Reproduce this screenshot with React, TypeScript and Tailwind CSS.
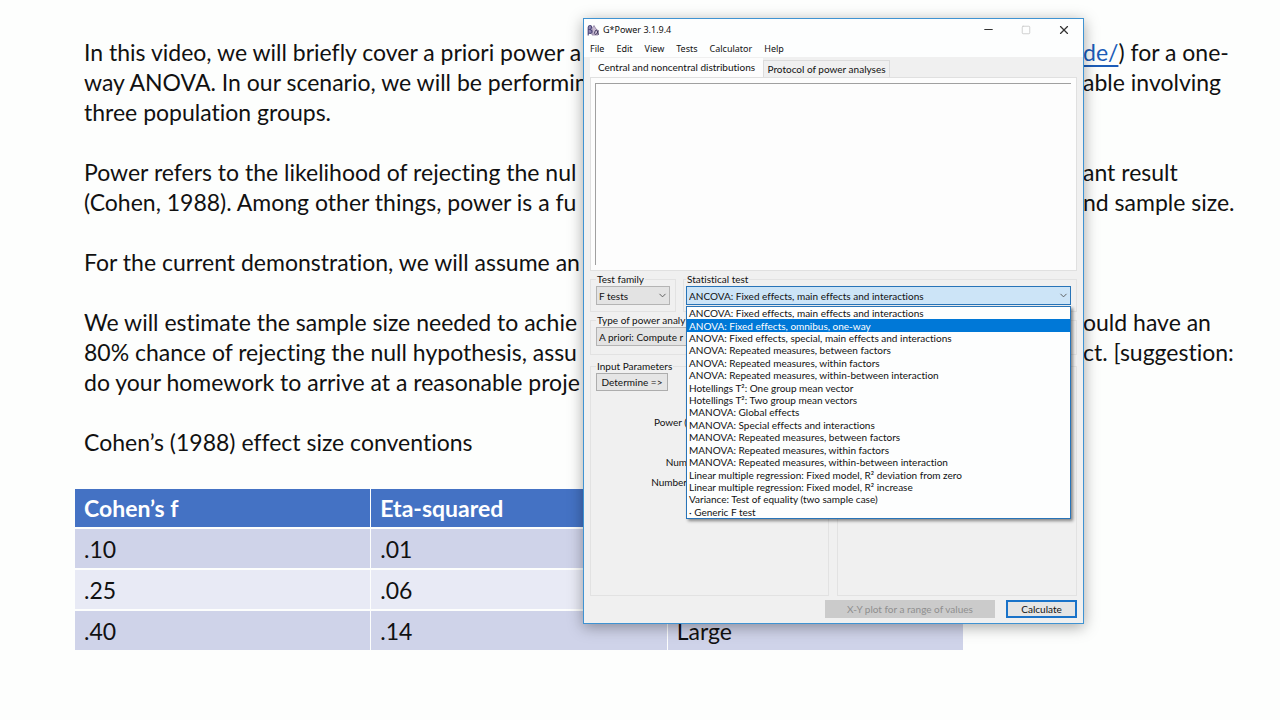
import type { ReactNode } from "react";
import { ChevronDown, Minus, Square, X } from "lucide-react";

type Line = { left: string; right?: ReactNode };

const paragraphs: Line[][] = [
  [
    {
      left: "In this video, we will briefly cover a priori power a",
      right: (
        <>
          <a href="#gpower" className="text-[#1c5cb8] underline decoration-2 underline-offset-4">
            de/
          </a>
          ) for a one-
        </>
      ),
    },
    { left: "way ANOVA. In our scenario, we will be performin", right: "able involving" },
    { left: "three population groups." },
  ],
  [
    { left: "Power refers to the likelihood of rejecting the nul", right: "ant result" },
    { left: "(Cohen, 1988). Among other things, power is a fu", right: "nd sample size." },
  ],
  [{ left: "For the current demonstration, we will assume an" }],
  [
    { left: "We will estimate the sample size needed to achie", right: "ould have an" },
    { left: "80% chance of rejecting the null hypothesis, assu", right: "ct. [suggestion:" },
    { left: "do your homework to arrive at a reasonable proje" },
  ],
  [{ left: "Cohen’s (1988) effect size conventions" }],
];

const conventions = [
  [".10", ".01", ""],
  [".25", ".06", ""],
  [".40", ".14", "Large"],
];

const tests = [
  "ANCOVA: Fixed effects, main effects and interactions",
  "ANOVA: Fixed effects, omnibus, one-way",
  "ANOVA: Fixed effects, special, main effects and interactions",
  "ANOVA: Repeated measures, between factors",
  "ANOVA: Repeated measures, within factors",
  "ANOVA: Repeated measures, within-between interaction",
  "Hotellings T²: One group mean vector",
  "Hotellings T²: Two group mean vectors",
  "MANOVA: Global effects",
  "MANOVA: Special effects and interactions",
  "MANOVA: Repeated measures, between factors",
  "MANOVA: Repeated measures, within factors",
  "MANOVA: Repeated measures, within-between interaction",
  "Linear multiple regression: Fixed model, R² deviation from zero",
  "Linear multiple regression: Fixed model, R² increase",
  "Variance: Test of equality (two sample case)",
  "· Generic F test",
];

function Document() {
  return (
    <main className="pl-[84px] pt-[37px] font-['Lato','Open_Sans',sans-serif] text-[23px] leading-[30px] text-[#111] [font-variant-ligatures:none]">
      <div className="flex flex-col gap-[30px]">
        {paragraphs.map((lines, i) => (
          <div key={i}>
            {lines.map((line) => (
              <p key={line.left} className="flex justify-between whitespace-nowrap">
                <span>{line.left}</span>
                <span className="w-[197px]">{line.right}</span>
              </p>
            ))}
          </div>
        ))}
      </div>
      <table className="-ml-[10px] mt-[30px] w-[890px] table-fixed border-separate border-spacing-x-[1px] border-spacing-y-[2px] text-left">
        <thead>
          <tr>
            {["Cohen’s f", "Eta-squared", ""].map((h) => (
              <th key={h} className="h-[38px] bg-[#4472c4] px-[9px] font-bold text-white">
                {h}
              </th>
            ))}
          </tr>
        </thead>
        <tbody>
          {conventions.map((row) => (
            <tr key={row[0]} className="odd:bg-[#cfd3e9] even:bg-[#e8eaf5]">
              {row.map((cell, i) => (
                <td key={i} className="h-[39px] px-[9px]">
                  {cell}
                </td>
              ))}
            </tr>
          ))}
        </tbody>
      </table>
    </main>
  );
}

function AppIcon() {
  return (
    <svg viewBox="0 0 12 12" className="size-3" aria-hidden="true">
      <path d="M5 11V4.500L7 1.500L9 5L11 6.500V11Z" fill="#c9bbd3" stroke="#8d7d9f" strokeWidth="0.8" />
      <path d="M1.200 11.500V3.500Q1.200 1.500 3 1.500T4.500 3.500Q4.500 5 3 5.500Q5.200 6 5 8T1.500 9" fill="#8f86b0" stroke="#4a4478" strokeWidth="1.100" />
      <path d="M11.500 6.500Q10 10.800 8.200 10.500T8.200 7T11.500 10.800" fill="none" stroke="#3a3458" strokeWidth="0.900" />
    </svg>
  );
}

function Group({ title, className, children }: { title: string; className: string; children?: ReactNode }) {
  return (
    <fieldset className={`min-w-0 border border-[#e2e2e2] pr-[5px] ${className}`}>
      <legend className="whitespace-nowrap px-px leading-[12px]">{title}</legend>
      {children}
    </fieldset>
  );
}

function Picker({ label, value, open }: { label: string; value: string; open?: boolean }) {
  return (
    <div className="relative">
      <select
        aria-label={label}
        defaultValue={value}
        className={`block h-[19px] w-full appearance-none border pl-[2px] pr-4 leading-[14px] ${
          open ? "border-[#2874b8] bg-[#cce4f7]" : "border-[#b4b4b4] bg-[#e3e3e3]"
        }`}
      >
        <option>{value}</option>
      </select>
      <ChevronDown strokeWidth={2} className="pointer-events-none absolute right-[2px] top-[4px] size-[11px] text-[#555]" />
    </div>
  );
}

function PowerWindow() {
  return (
    <section
      aria-label="G*Power"
      className="absolute right-[196px] top-[18px] flex h-[606px] w-[501px] flex-col border border-[#3f93d2] bg-[#f0f0f0] font-['Lato','Open_Sans',sans-serif] text-[10px] leading-[12px] text-[#111] shadow-[0_3px_14px_rgba(0,0,0,0.35)] [font-variant-ligatures:none]"
    >
      <header className="flex h-[21px] items-center bg-[#fdfefe] pl-[3px] font-['Noto_Sans','Open_Sans',sans-serif]">
        <AppIcon />
        <h1 className="ml-1 flex-1 text-[9px]">G*Power 3.1.9.4</h1>
        <button aria-label="Minimize" className="flex w-[37px] justify-center text-[#333]">
          <Minus className="size-[13px]" strokeWidth={2} />
        </button>
        <button aria-label="Maximize" disabled className="flex w-[38px] justify-center text-[#c8c8c8]">
          <Square className="size-[10px]" strokeWidth={2} />
        </button>
        <button aria-label="Close" className="flex w-[38px] justify-center text-[#333]">
          <X className="size-[14px]" strokeWidth={2} />
        </button>
      </header>
      <nav className="flex h-[17px] items-center gap-3 bg-[#fdfefe] pl-[6px] font-['Noto_Sans','Open_Sans',sans-serif] text-[9px]">
        {["File", "Edit", "View", "Tests", "Calculator", "Help"].map((m) => (
          <button key={m}>{m}</button>
        ))}
      </nav>
      <div className="flex flex-1 flex-col px-[6px] pt-px">
        <div role="tablist" className="flex items-end">
          <button role="tab" aria-selected="true" className="h-[19px] w-[173px] bg-[#fdfdfd] pb-[2px]">
            Central and noncentral distributions
          </button>
          <button role="tab" aria-selected="false" className="h-[17px] w-[127px] border border-b-0 border-[#dcdcdc] bg-[#f0f0f0]">
            Protocol of power analyses
          </button>
        </div>
        <div role="tabpanel" className="h-[194px] border border-[#e0e0e0] bg-[#fdfdfd] py-[5px] pl-[4px] pr-[5px]">
          <div className="h-[182px] border-l border-t border-[#a0a0a0]" />
        </div>
        <div className="mt-[2px] flex gap-[7px]">
          <Group title="Test family" className="h-[39px] w-[86px] pl-[5px]">
            <div className="mt-px">
              <Picker label="Test family" value="F tests" />
            </div>
          </Group>
          <Group title="Statistical test" className="h-[39px] flex-1 pl-[2px]">
            <div className="relative mt-px">
              <Picker label="Statistical test" value={tests[0]} open />
              <ul
                role="listbox"
                aria-label="Statistical test options"
                className="absolute left-0 top-[20px] z-10 grid h-[213px] w-full auto-rows-fr border border-[#2874b8] bg-[#fdfefe] shadow-[2px_2px_3px_rgba(0,0,0,0.45)]"
              >
                {tests.map((t, i) => (
                  <li
                    key={t}
                    role="option"
                    aria-selected={i === 1}
                    className="flex items-center whitespace-nowrap pl-[2px] aria-selected:bg-[#0078d7] aria-selected:text-white"
                  >
                    {t}
                  </li>
                ))}
              </ul>
            </div>
          </Group>
        </div>
        <Group title="Type of power analy" className="mt-[2px] h-[41px] pl-[5px]">
          <div className="mt-px">
            <Picker label="Type of power analysis" value="A priori: Compute r" />
          </div>
        </Group>
        <div className="mt-[5px] flex gap-[8px]">
          <Group title="Input Parameters" className="h-[236px] w-[239px] pl-[5px]">
            <button className="mt-px h-[18px] w-[72px] border border-[#adadad] bg-[#e5e5e5]">Determine =&gt;</button>
            <div className="mt-[21px] flex w-[91px] flex-col text-right">
              <span className="h-[40px] leading-[20px]">Power (</span>
              <span className="h-[20px] leading-[20px]">Num</span>
              <span className="h-[20px] leading-[20px]">Number</span>
            </div>
          </Group>
          <Group title="" className="mt-[6px] h-[230px] flex-1" />
        </div>
        <div className="mt-1 flex justify-end gap-[11px]">
          <button disabled className="h-[18px] w-[170px] bg-[#cbcbcb] text-[#8f8f8f]">
            X-Y plot for a range of values
          </button>
          <button className="h-[18px] w-[71px] border-2 border-[#1a73c9] bg-[#e5e5e5]">Calculate</button>
        </div>
      </div>
    </section>
  );
}

export default function App() {
  return (
    <div className="relative min-h-screen overflow-hidden bg-[#fdfefd]">
      <Document />
      <PowerWindow />
    </div>
  );
}
